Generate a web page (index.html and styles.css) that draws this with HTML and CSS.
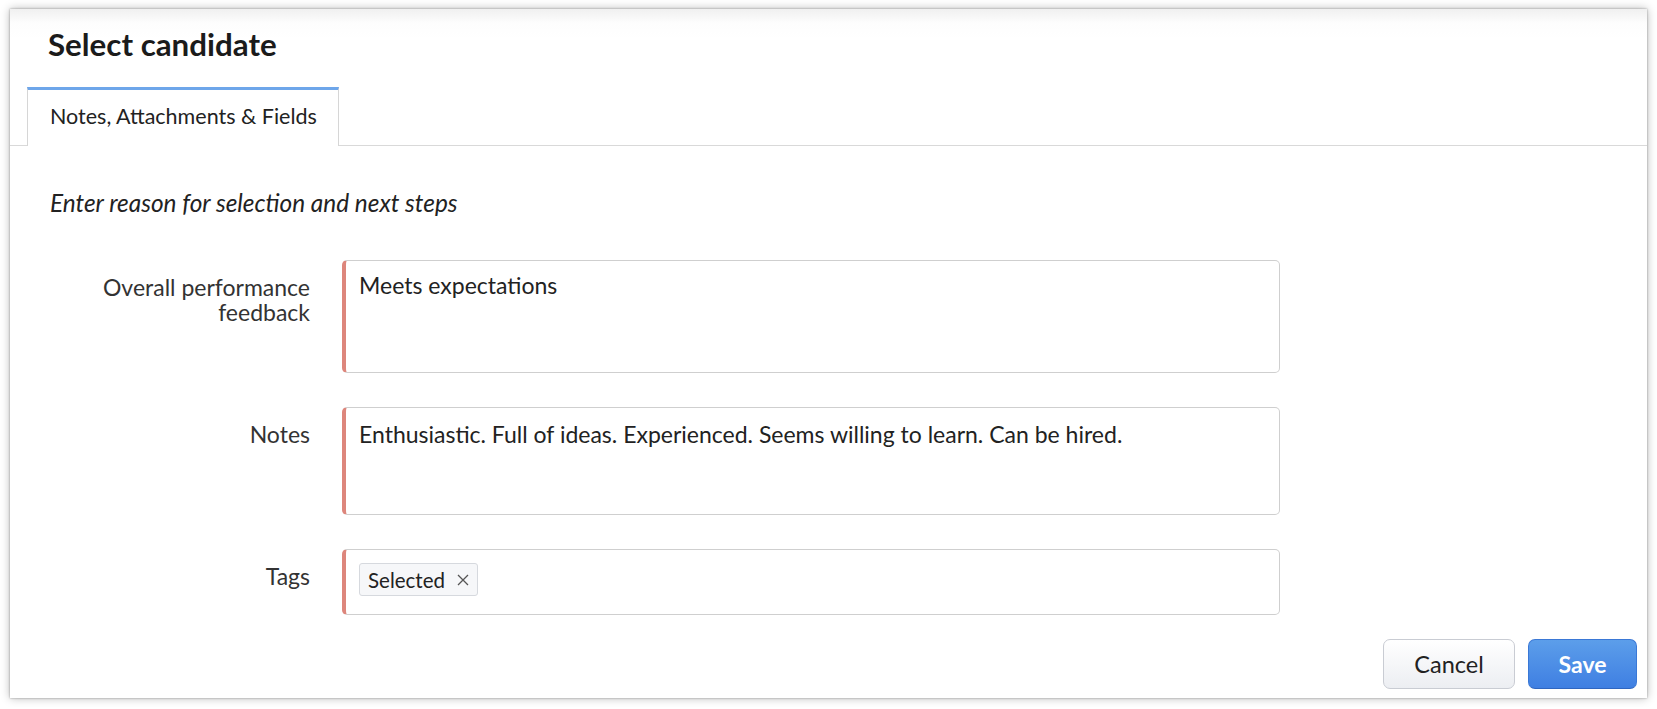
FILE: index.html
```html
<!DOCTYPE html>
<html lang="en">
<head>
<meta charset="utf-8">
<title>Select candidate</title>
<link rel="stylesheet" href="styles.css">
</head>
<body>
<div class="dialog">
  <div class="header">
    <h1 class="title">Select candidate</h1>
  </div>
  <div class="tabs">
    <div class="tab active">Notes, Attachments &amp; Fields</div>
  </div>
  <div class="content">
    <p class="hint">Enter reason for selection and next steps</p>
    <div class="form">
      <div class="label">Overall performance<br>feedback</div>
      <div class="field field-tall">Meets expectations</div>
      <div class="label">Notes</div>
      <div class="field field-mid">Enthusiastic. Full of ideas. Experienced. Seems willing to learn. Can be hired.</div>
      <div class="label">Tags</div>
      <div class="field field-tags">
        <span class="chip">Selected<svg class="chip-x" width="12" height="12" viewBox="0 0 12 12"><path d="M1 1L11 11M11 1L1 11" stroke="#555" stroke-width="1.3" fill="none"/></svg></span>
      </div>
    </div>
  </div>
  <div class="footer">
    <button class="btn btn-cancel">Cancel</button>
    <button class="btn btn-save">Save</button>
  </div>
</div>
</body>
</html>
```
FILE: styles.css
```css
* { box-sizing: border-box; }
html, body { margin: 0; padding: 0; background: #ffffff; }
body {
  font-family: Lato, "Open Sans", sans-serif;
  color: #222;
  padding: 9px 10px;
}
.dialog {
  width: 1637px;
  height: 689px;
  background: #fff;
  box-shadow: 0 0 2px rgba(0,0,0,0.35), 0 0 9px rgba(0,0,0,0.28);
  display: flex;
  flex-direction: column;
}
.header {
  height: 78px;
  padding: 17px 0 0 38px;
  background: linear-gradient(#f0f0f0 0, #fdfdfd 14px, #fff 30px);
}
.title {
  margin: 0;
  font-size: 31.3px;
  line-height: 36px;
  font-weight: 700;
  color: #1b1b1b;
}
.tabs {
  height: 59px;
  border-bottom: 1px solid #d9d9d9;
  padding-left: 17px;
  display: flex;
}
.tab {
  width: 312px;
  height: 59px;
  border-top: 3px solid #6ea6ea;
  border-left: 1px solid #d6d6d6;
  border-right: 1px solid #d6d6d6;
  background: #fff;
  font-size: 21.5px;
  line-height: 26px;
  padding: 13px 0 0 22px;
  color: #222;
}
.content {
  padding-top: 43px;
}
.hint {
  margin: 0 0 43px 40px;
  font-style: italic;
  font-size: 24.4px;
  line-height: 28px;
  color: #222;
}
.form {
  display: grid;
  grid-template-columns: 300px 938px;
  column-gap: 32px;
  row-gap: 34px;
}
.label {
  text-align: right;
  font-size: 23px;
  line-height: 25px;
  padding-top: 15px;
  color: #333;
}
.field {
  border: 1px solid #cfcfcf;
  border-left: 4px solid #dd867c;
  border-radius: 5px;
  font-size: 23px;
  line-height: 24px;
  padding: 12px 13px 0;
  color: #222;
}
.field-tall { height: 113px; }
.field-mid { height: 108px; padding-top: 14px; }
.field-tags { height: 66px; padding: 13px 13px 0; }
.chip {
  display: inline-flex;
  align-items: center;
  height: 33px;
  padding: 0 8px 0 8px;
  border: 1px solid #d6d9de;
  border-radius: 3px;
  background: #f6f7f9;
  font-size: 20.5px;
  color: #222;
}
.chip-x {
  margin-left: 12px;
  margin-top: 1px;
}
.footer {
  margin-top: auto;
  display: flex;
  justify-content: flex-end;
  gap: 13px;
  padding: 0 10px 9px 0;
}
.btn {
  height: 50px;
  border-radius: 7px;
  font-family: Lato, "Open Sans", sans-serif;
  font-size: 23.5px;
  cursor: pointer;
}
.btn-cancel {
  width: 132px;
  background: linear-gradient(#ffffff, #eceef2);
  border: 1px solid #c9ccd3;
  color: #222;
}
.btn-save {
  width: 109px;
  background: linear-gradient(#5c9eea, #3f7fe2);
  border: 1px solid #3a78d6;
  border-bottom-color: #2f66c0;
  color: #fff;
  font-weight: 700;
  font-size: 23px;
}
```
